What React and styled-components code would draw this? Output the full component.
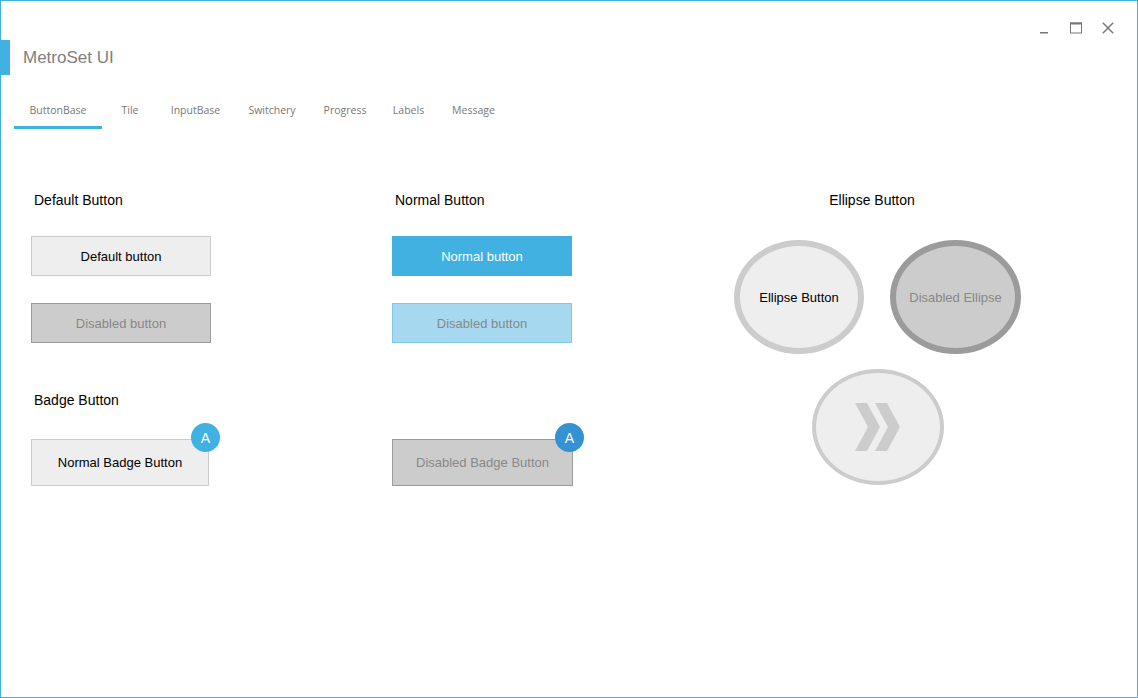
import React from 'react';
import styled, { createGlobalStyle } from 'styled-components';

const GlobalStyle = createGlobalStyle`
  html, body {
    margin: 0;
    padding: 0;
    background: #fff;
  }
`;

const Window = styled.div`
  width: 1138px;
  height: 698px;
  box-sizing: border-box;
  border: 1px solid #41b1e1;
  background: #fff;
  font-family: 'Liberation Sans', Arial, sans-serif;
  display: flex;
  flex-direction: column;
`;

const TopBar = styled.div`
  height: 39px;
  display: flex;
  justify-content: flex-end;
  padding-right: 13px;
  box-sizing: border-box;
  padding-top: 21px;
`;

const Control = styled.div`
  width: 32px;
  height: 12px;
  display: flex;
  justify-content: center;
`;

const Header = styled.div`
  height: 35px;
  display: flex;
  align-items: center;
`;

const Accent = styled.div`
  width: 9px;
  height: 35px;
  background: #41b1e1;
`;

const Title = styled.div`
  margin-left: 13px;
  font-size: 17px;
  color: #808080;
`;

const Tabs = styled.div`
  display: flex;
  margin-top: 20px;
  margin-left: 13px;
`;

const Tab = styled.div`
  width: ${(p) => p.$width}px;
  height: 24px;
  padding-top: 7px;
  border-bottom: 3px solid ${(p) => (p.$active ? '#41b1e1' : 'transparent')};
  text-align: center;
  font-family: 'Open Sans', sans-serif;
  font-size: 10.5px;
  line-height: 16px;
  color: #777;
`;

const Content = styled.div`
  display: flex;
  padding-left: 30px;
  padding-top: 63px;
`;

const Column = styled.div`
  width: ${(p) => p.$width}px;
  display: flex;
  flex-direction: column;
  align-items: ${(p) => (p.$center ? 'center' : 'flex-start')};
`;

const Heading = styled.div`
  font-size: 14px;
  line-height: 16px;
  color: #000;
  padding-left: ${(p) => (p.$center ? 0 : 3)}px;
  margin-right: ${(p) => (p.$center ? 11 : 0)}px;
  margin-top: ${(p) => p.$top || 0}px;
`;

const variants = {
  default: { bg: '#eeeeee', border: '#cccccc', color: '#000' },
  disabled: { bg: '#cccccc', border: '#9b9b9b', color: '#888' },
  normal: { bg: '#41b1e1', border: '#41b1e1', color: '#fff' },
  normalDisabled: { bg: '#a6d9f0', border: '#7fc8ea', color: '#888' },
};

const Button = styled.div`
  position: relative;
  width: ${(p) => p.$width || 180}px;
  height: ${(p) => p.$height || 40}px;
  box-sizing: border-box;
  margin-top: ${(p) => p.$top || 0}px;
  background: ${(p) => variants[p.$variant].bg};
  border: 1px solid ${(p) => variants[p.$variant].border};
  color: ${(p) => variants[p.$variant].color};
  font-size: 13px;
  display: flex;
  align-items: center;
  justify-content: center;
`;

const Badge = styled.div`
  position: absolute;
  top: -17px;
  right: -12px;
  width: 29px;
  height: 29px;
  border-radius: 50%;
  background: ${(p) => p.$bg};
  color: #fff;
  font-size: 14px;
  display: flex;
  align-items: center;
  justify-content: center;
`;

const EllipseRow = styled.div`
  display: flex;
  gap: 26px;
  margin-top: 32px;
`;

const Ellipse = styled.div`
  width: ${(p) => p.$w}px;
  height: ${(p) => p.$h}px;
  box-sizing: border-box;
  border-radius: 50%;
  border: ${(p) => p.$bw}px solid ${(p) => p.$border};
  background: ${(p) => p.$bg};
  color: ${(p) => p.$color};
  margin-top: ${(p) => p.$top || 0}px;
  font-size: 13px;
  display: flex;
  align-items: center;
  justify-content: center;
`;

const tabs = [
  { label: 'ButtonBase', width: 88, active: true },
  { label: 'Tile', width: 56 },
  { label: 'InputBase', width: 75 },
  { label: 'Switchery', width: 78 },
  { label: 'Progress', width: 68 },
  { label: 'Labels', width: 59 },
  { label: 'Message', width: 71 },
];

const App = () => {
  return (
    <>
      <GlobalStyle />
      <Window>
        <TopBar>
          <Control>
            <svg width="12" height="12" viewBox="0 0 12 12">
              <rect x="2" y="10" width="8" height="1.5" fill="#777" />
            </svg>
          </Control>
          <Control>
            <svg width="12" height="12" viewBox="0 0 12 12">
              <rect x="0.5" y="1" width="11" height="10" fill="none" stroke="#777" strokeWidth="1" />
              <rect x="0" y="0.5" width="12" height="2" fill="#777" />
            </svg>
          </Control>
          <Control>
            <svg width="12" height="12" viewBox="0 0 12 12">
              <path d="M0.8 0.8 L11.2 11.2 M11.2 0.8 L0.8 11.2" stroke="#777" strokeWidth="1.5" />
            </svg>
          </Control>
        </TopBar>
        <Header>
          <Accent />
          <Title>MetroSet UI</Title>
        </Header>
        <Tabs>
          {tabs.map((t) => (
            <Tab key={t.label} $width={t.width} $active={t.active}>
              {t.label}
            </Tab>
          ))}
        </Tabs>
        <Content>
          <Column $width={361}>
            <Heading>Default Button</Heading>
            <Button $variant="default" $top={28}>Default button</Button>
            <Button $variant="disabled" $top={27}>Disabled button</Button>
            <Heading $top={49}>Badge Button</Heading>
            <Button $variant="default" $width={178} $height={47} $top={31}>
              Normal Badge Button
              <Badge $bg="#41b1e1">A</Badge>
            </Button>
          </Column>
          <Column $width={342}>
            <Heading>Normal Button</Heading>
            <Button $variant="normal" $top={28}>Normal button</Button>
            <Button $variant="normalDisabled" $top={27}>Disabled button</Button>
            <Button $variant="disabled" $width={181} $height={47} $top={96}>
              Disabled Badge Button
              <Badge $bg="#3592d0">A</Badge>
            </Button>
          </Column>
          <Column $width={287} $center>
            <Heading $center>Ellipse Button</Heading>
            <EllipseRow>
              <Ellipse $w={130} $h={114} $bw={6} $border="#cccccc" $bg="#eeeeee" $color="#000">
                Ellipse Button
              </Ellipse>
              <Ellipse $w={131} $h={114} $bw={6} $border="#9b9b9b" $bg="#cccccc" $color="#888">
                Disabled Ellipse
              </Ellipse>
            </EllipseRow>
            <Ellipse $w={132} $h={116} $bw={4} $border="#cccccc" $bg="#eeeeee" $top={15}>
              <svg width="45" height="48" viewBox="0 0 45 48">
                <polygon points="0,0 12,0 25,24 12,48 0,48 13,24" fill="#cccccc" />
                <polygon points="20,0 32,0 45,24 32,48 20,48 33,24" fill="#cccccc" />
              </svg>
            </Ellipse>
          </Column>
        </Content>
      </Window>
    </>
  );
};

export default App;
